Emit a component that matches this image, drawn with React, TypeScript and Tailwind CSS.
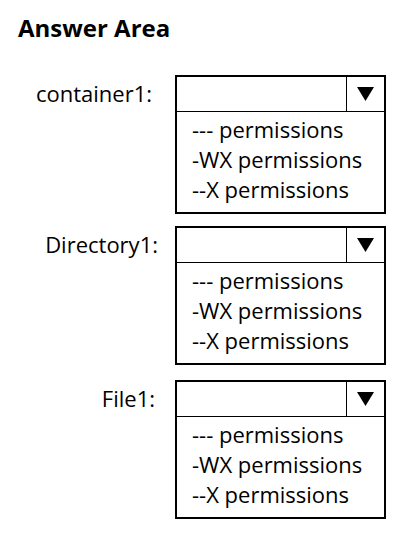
import React from "react";

const options = ["--- permissions", "-WX permissions", "--X permissions"];

function Dropdown() {
  return (
    <div className="w-[211px] h-[139px] border-2 border-black flex flex-col">
      <div className="h-[35px] flex border-b border-black">
        <div className="flex-1" />
        <div className="w-[38px] border-l border-black flex items-center justify-center">
          <svg width="17" height="14" viewBox="0 0 17 14">
            <polygon points="0,0 17,0 8.5,14" fill="black" />
          </svg>
        </div>
      </div>
      <div className="pl-[15px] pt-[2px] flex flex-col">
        {options.map((o) => (
          <div key={o} className="h-[30px] leading-[30px] text-[22px] text-black whitespace-nowrap">
            {o}
          </div>
        ))}
      </div>
    </div>
  );
}

export default function App() {
  return (
    <div
      className="w-[413px] h-[538px] bg-white relative overflow-hidden"
      style={{ fontFamily: '"Open Sans", "Noto Sans", sans-serif' }}
    >
      <div className="pl-[18px] pt-[13px] text-[24px] font-bold leading-[30px] text-black">Answer Area</div>
      <div className="mt-[32px] flex flex-col">
        <div className="flex items-start">
          <div className="w-[175px] h-[37px] flex items-center justify-end pr-[23px] text-[22px] text-black">container1:</div>
          <Dropdown />
        </div>
        <div className="flex items-start mt-[12px]">
          <div className="w-[175px] h-[37px] flex items-center justify-end pr-[17px] text-[22px] text-black">Directory1:</div>
          <Dropdown />
        </div>
        <div className="flex items-start mt-[15px]">
          <div className="w-[175px] h-[37px] flex items-center justify-end pr-[20px] text-[22px] text-black">File1:</div>
          <Dropdown />
        </div>
      </div>
    </div>
  );
}
